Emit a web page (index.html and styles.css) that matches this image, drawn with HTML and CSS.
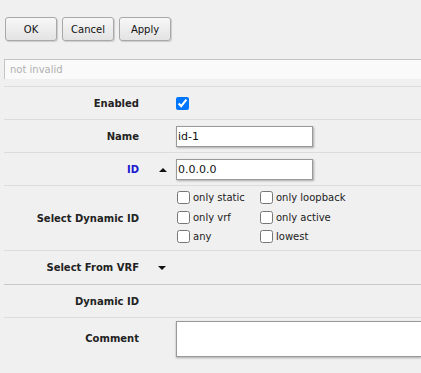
FILE: index.html
```html
<!DOCTYPE html>
<html lang="en">
<head>
  <meta charset="UTF-8">
  <title>ID</title>
  <link rel="stylesheet" href="styles.css">
</head>
<body>
  <div class="toolbar">
    <button class="btn">OK</button>
    <button class="btn">Cancel</button>
    <button class="btn">Apply</button>
  </div>
  <input class="status" type="text" value="not invalid" readonly>
  <div class="form">
    <div class="row">
      <div class="label">Enabled</div>
      <div class="mark"></div>
      <div class="field"><input type="checkbox" class="check" checked></div>
    </div>
    <div class="row">
      <div class="label">Name</div>
      <div class="mark"></div>
      <div class="field"><input type="text" class="text" value="id-1"></div>
    </div>
    <div class="row">
      <div class="label link">ID</div>
      <div class="mark"><span class="arrow-up"></span></div>
      <div class="field"><input type="text" class="text" value="0.0.0.0"></div>
    </div>
    <div class="row dyn">
      <div class="label">Select Dynamic ID</div>
      <div class="mark"></div>
      <div class="field options">
        <label class="option"><input type="checkbox" class="check">only static</label>
        <label class="option"><input type="checkbox" class="check">only loopback</label>
        <label class="option"><input type="checkbox" class="check">only vrf</label>
        <label class="option"><input type="checkbox" class="check">only active</label>
        <label class="option"><input type="checkbox" class="check">any</label>
        <label class="option"><input type="checkbox" class="check">lowest</label>
      </div>
    </div>
    <div class="row vrf">
      <div class="label">Select From VRF</div>
      <div class="mark"><span class="arrow-down"></span></div>
      <div class="field"></div>
    </div>
    <div class="row">
      <div class="label">Dynamic ID</div>
      <div class="mark"></div>
      <div class="field"></div>
    </div>
    <div class="row comment">
      <div class="label">Comment</div>
      <div class="mark"></div>
      <div class="field wide"><textarea class="area"></textarea></div>
    </div>
  </div>
</body>
</html>
```
FILE: styles.css
```css
* {
  box-sizing: border-box;
}
body {
  margin: 0;
  background: #f0f0f0;
  color: #222;
  font-family: 'DejaVu Sans', Verdana, sans-serif;
  font-size: 10px;
  overflow: hidden;
}
.toolbar {
  display: flex;
  gap: 5px;
  padding: 17px 0 0 5px;
}
.btn {
  width: 52px;
  height: 24px;
  padding: 0;
  font-family: inherit;
  font-size: 10px;
  color: #111;
  background: linear-gradient(#f7f7f7, #e3e3e3);
  border: 1px solid #a8a8a8;
  border-radius: 3px;
  box-shadow: 1px 1px 1px rgba(0, 0, 0, 0.15);
}
.status {
  display: block;
  width: calc(100% - 4px);
  height: 20px;
  margin: 18px 0 0 4px;
  padding: 0 5px;
  font-family: inherit;
  font-size: 10px;
  color: #b0b0b0;
  background: #fafafa;
  border: none;
  border-top: 1px solid #c4c4c4;
  border-left: 1px solid #c4c4c4;
  outline: none;
}
.form {
  margin: 7px 0 0 4px;
}
.row {
  display: flex;
  align-items: center;
  min-height: 33px;
  border-top: 1px solid #dcdcdc;
}
.label {
  flex-shrink: 0;
  width: 135px;
  text-align: right;
  font-weight: bold;
  color: #222;
}
.label.link {
  color: #1818d0;
}
.mark {
  flex-shrink: 0;
  width: 37px;
  padding-left: 20px;
  display: flex;
  align-items: center;
}
.arrow-up {
  width: 0;
  height: 0;
  border-left: 4px solid transparent;
  border-right: 4px solid transparent;
  border-bottom: 4px solid #111;
  margin-top: 2px;
}
.arrow-down {
  width: 0;
  height: 0;
  border-left: 4px solid transparent;
  border-right: 4px solid transparent;
  border-top: 4px solid #111;
  margin-left: -1px;
}
.field {
  display: flex;
  align-items: center;
}
.field.wide {
  flex: 1;
}
.check {
  width: 13px;
  height: 13px;
  margin: 0;
}
.text {
  width: 137px;
  height: 21px;
  padding: 0 1px;
  font-family: inherit;
  font-size: 11px;
  color: #111;
  background: #fff;
  border: 1px solid #999;
  box-shadow: 1px 1px 2px rgba(0, 0, 0, 0.3);
  outline: none;
}
.row.dyn {
  min-height: 65px;
  align-items: flex-start;
}
.row.dyn .label {
  align-self: center;
}
.options {
  display: grid;
  grid-template-columns: 83px auto;
  grid-auto-rows: 19.5px;
  padding: 2px 0 0 1px;
}
.option {
  display: flex;
  align-items: center;
  gap: 3px;
  font-size: 10px;
  color: #222;
}
.row.vrf {
  min-height: 34px;
}
.row.vrf + .row {
  border-top-color: #c8c8c8;
}
.row.comment {
  align-items: flex-start;
  padding-top: 3px;
  min-height: 45px;
}
.row.comment .label {
  margin-top: 12px;
}
.area {
  width: 100%;
  height: 36px;
  resize: none;
  font-family: inherit;
  background: #fff;
  border: 1px solid #999;
  border-right: none;
  box-shadow: 0 1px 2px rgba(0, 0, 0, 0.3);
  outline: none;
}
```
